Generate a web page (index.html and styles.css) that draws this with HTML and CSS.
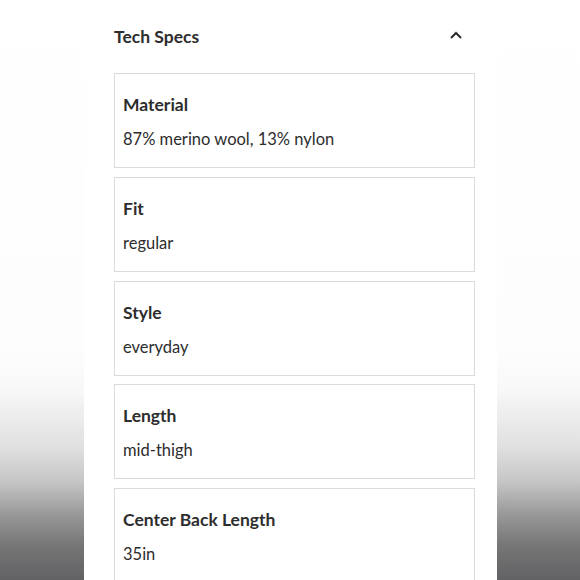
FILE: index.html
```html
<!DOCTYPE html>
<html>
<head>
<meta charset="utf-8">
<link rel="stylesheet" href="styles.css">
</head>
<body>
<div class="page">
  <div class="side side-left"></div>
  <main class="panel">
    <div class="header">
      <h2 class="header-title">Tech Specs</h2>
      <svg class="chevron" width="14" height="10" viewBox="0 0 14 10"><path d="M2 8 L7 3 L12 8" fill="none" stroke="#2b2b2b" stroke-width="2"/></svg>
    </div>
    <div class="specs">
      <div class="spec"><div class="spec-name">Material</div><div class="spec-value">87% merino wool, 13% nylon</div></div>
      <div class="spec"><div class="spec-name">Fit</div><div class="spec-value">regular</div></div>
      <div class="spec"><div class="spec-name">Style</div><div class="spec-value">everyday</div></div>
      <div class="spec"><div class="spec-name">Length</div><div class="spec-value">mid-thigh</div></div>
      <div class="spec"><div class="spec-name">Center Back Length</div><div class="spec-value">35in</div></div>
    </div>
  </main>
  <div class="side side-right"></div>
</div>
</body>
</html>
```
FILE: styles.css
```css
html, body {
  margin: 0;
  padding: 0;
  height: 580px;
  overflow: hidden;
}
body {
  font-family: Lato, "Open Sans", sans-serif;
  color: #2d2d2d;
}
.page {
  display: flex;
  height: 580px;
}
.side {
  background: linear-gradient(to bottom, #ffffff 0%, #fdfdfd 60%, #f8f8f8 67%, #e0e0e0 77%, #c6c6c6 83%, #9a9a9b 88.5%, #767677 94%, #626264 100%);
}
.side-left { width: 84px; }
.side-right { width: 83px; }
.panel {
  width: 413px;
  background: #fff;
  padding: 0 22px 0 30px;
  box-sizing: border-box;
}
.header {
  height: 73px;
  display: flex;
  align-items: center;
  justify-content: space-between;
  padding-right: 12px;
}
.header-title {
  margin: 0;
  font-size: 17.5px;
  font-weight: 700;
}
.chevron { margin-top: -4px; }
.specs {
  display: flex;
  flex-direction: column;
  gap: 8.75px;
}
.spec {
  border: 1.5px solid #dadada;
  height: 95px;
  box-sizing: border-box;
  padding: 19px 8px 0 8px;
}
.spec-name {
  font-size: 17.5px;
  font-weight: 700;
  line-height: 24px;
}
.spec-value {
  font-size: 16.5px;
  line-height: 24px;
  margin-top: 10px;
}
```
